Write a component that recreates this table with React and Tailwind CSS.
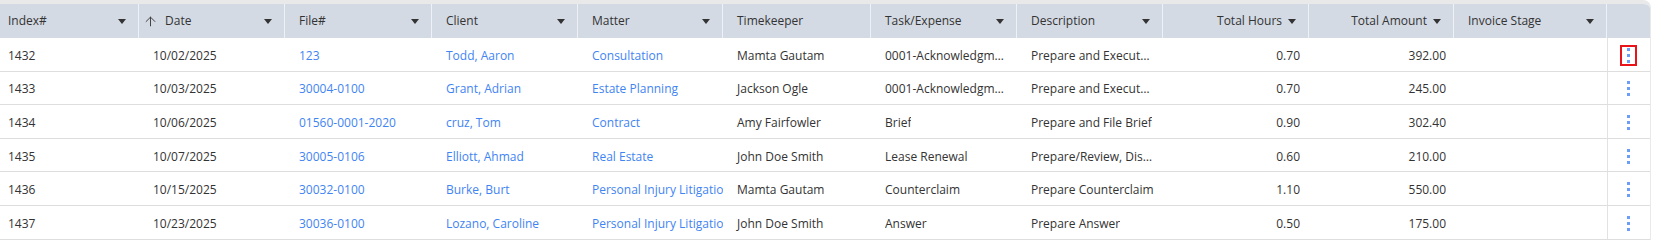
import React from 'react';
import { ArrowUp } from 'lucide-react';

const rows = [
  { index: '1432', date: '10/02/2025', file: '123', client: 'Todd, Aaron', matter: 'Consultation', keeper: 'Mamta Gautam', task: '0001-Acknowledgment of Service', desc: 'Prepare and Execute Acknowledgment', hours: '0.70', amount: '392.00' },
  { index: '1433', date: '10/03/2025', file: '30004-0100', client: 'Grant, Adrian', matter: 'Estate Planning', keeper: 'Jackson Ogle', task: '0001-Acknowledgment of Service', desc: 'Prepare and Execute Acknowledgment', hours: '0.70', amount: '245.00' },
  { index: '1434', date: '10/06/2025', file: '01560-0001-2020', client: 'cruz, Tom', matter: 'Contract', keeper: 'Amy Fairfowler', task: 'Brief', desc: 'Prepare and File Brief', hours: '0.90', amount: '302.40' },
  { index: '1435', date: '10/07/2025', file: '30005-0106', client: 'Elliott, Ahmad', matter: 'Real Estate', keeper: 'John Doe Smith', task: 'Lease Renewal', desc: 'Prepare/Review, Discuss Lease', hours: '0.60', amount: '210.00' },
  { index: '1436', date: '10/15/2025', file: '30032-0100', client: 'Burke, Burt', matter: 'Personal Injury Litigation', keeper: 'Mamta Gautam', task: 'Counterclaim', desc: 'Prepare Counterclaim', hours: '1.10', amount: '550.00' },
  { index: '1437', date: '10/23/2025', file: '30036-0100', client: 'Lozano, Caroline', matter: 'Personal Injury Litigation', keeper: 'John Doe Smith', task: 'Answer', desc: 'Prepare Answer', hours: '0.50', amount: '175.00' },
];

const grid = 'grid grid-cols-[139px_146px_147px_146px_145px_148px_146px_146px_146px_145px_153px_43px]';

const Caret = () => (
  <span className="inline-block w-0 h-0 border-l-[4.5px] border-r-[4.5px] border-t-[5px] border-l-transparent border-r-transparent border-t-[#333]" />
);

const HeadCell = ({ children, right, first }) => (
  <div className={`h-full flex items-center border-r border-[#eef1f5] ${first ? 'pl-2' : 'pl-[14px]'} pr-[12px] ${right ? 'justify-end gap-[6px]' : 'justify-between'}`}>
    <div className="flex items-center whitespace-nowrap">{children}</div>
    <Caret />
  </div>
);

const Kebab = ({ boxed }) => (
  <div className={`flex flex-col items-center justify-center gap-[3px] w-[17px] h-[21px] ${boxed ? 'border-2 border-[#e8141a]' : 'border-2 border-transparent'}`}>
    <span className="w-[3px] h-[3px] bg-[#6b9ef6]" />
    <span className="w-[3px] h-[3px] bg-[#6b9ef6]" />
    <span className="w-[3px] h-[3px] bg-[#6b9ef6]" />
  </div>
);

export default function App() {
  const cell = 'flex items-center pt-[3px] pl-[14px] pr-[8px] overflow-hidden whitespace-nowrap';
  const link = 'text-[#3f84f3]';
  return (
    <div className="w-[1651px] bg-white text-[12px] text-[#333] font-['Open_Sans',sans-serif]">
      <div className="border-t-[4px] border-r border-[#e9e9e9] rounded-tr-[8px] overflow-hidden">
        <div className={`${grid} h-[34px] bg-[#d3dae4]`}>
          <HeadCell first>Index#</HeadCell>
          <div className="h-full flex items-center justify-between border-r border-[#eef1f5] pl-[4px] pr-[12px]">
            <div className="flex items-center gap-[7px]">
              <ArrowUp size={15} strokeWidth={1.6} className="text-[#444]" />
              <span>Date</span>
            </div>
            <Caret />
          </div>
          <HeadCell>File#</HeadCell>
          <HeadCell>Client</HeadCell>
          <HeadCell>Matter</HeadCell>
          <div className="h-full flex items-center pl-[14px] border-r border-[#eef1f5]">Timekeeper</div>
          <HeadCell>Task/Expense</HeadCell>
          <HeadCell>Description</HeadCell>
          <HeadCell right>Total Hours</HeadCell>
          <HeadCell right>Total Amount</HeadCell>
          <HeadCell>Invoice Stage</HeadCell>
          <div className="h-full" />
        </div>
        {rows.map((r, i) => (
          <div key={r.index} className={`${grid} h-[33.6px] border-b border-[#dedede]`}>
            <div className="flex items-center pt-[3px] pl-2">{r.index}</div>
            <div className={cell}>{r.date}</div>
            <div className={`${cell} ${link}`}>{r.file}</div>
            <div className={`${cell} ${link}`}>{r.client}</div>
            <div className={`${cell} ${link} pr-0`}>{r.matter}</div>
            <div className={cell}>{r.keeper}</div>
            <div className={`${cell} pr-[6px]`}><span className="truncate">{r.task}</span></div>
            <div className={`${cell} pr-[4px]`}><span className="truncate">{r.desc}</span></div>
            <div className={`${cell} justify-end pr-[9px]`}>{r.hours}</div>
            <div className={`${cell} justify-end pr-[7px]`}>{r.amount}</div>
            <div className={cell} />
            <div className="flex items-center justify-center border-l border-[#e2e2e2] pt-[2px] pr-[1px]">
              <Kebab boxed={i === 0} />
            </div>
          </div>
        ))}
      </div>
    </div>
  );
}
